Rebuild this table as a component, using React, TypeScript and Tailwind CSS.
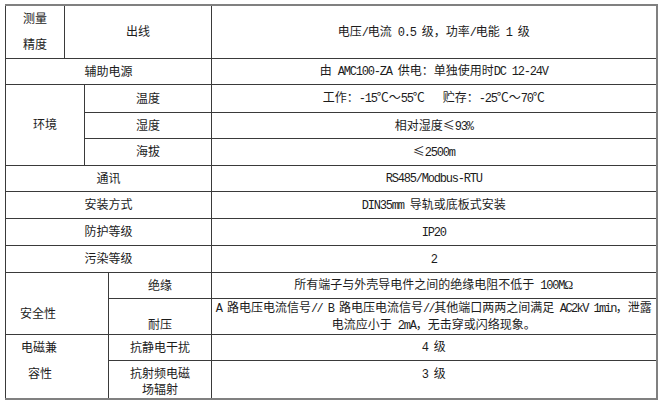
import React from "react";

const td = "border border-[#3a3a3a] text-center align-middle p-0";

function L({ children, tight }: { children: React.ReactNode; tight?: boolean }) {
  return (
    <span
      className={
        tight
          ? "font-['Liberation_Mono','Noto_Sans_CJK_SC',monospace] text-[12px] tracking-[-1.6px] whitespace-pre"
          : "font-['Liberation_Mono','Noto_Sans_CJK_SC',monospace] text-[12px] tracking-[-1.2px] whitespace-pre"
      }
    >
      {children}
    </span>
  );
}

function C({ children }: { children: React.ReactNode }) {
  return <span className="font-['Noto_Sans_CJK_SC',sans-serif]">{children}</span>;
}

export default function App() {
  return (
    <div className="w-[663px] h-[400px] bg-white pl-[5px] pt-[4px] font-['Liberation_Serif','Noto_Sans_CJK_SC',serif]">
      <table className="table-fixed border-collapse w-[651px] text-[12px] leading-4 text-[#1c1c1c] border-t-2 border-r-2 border-b-2 border-[#808080]">
        <colgroup>
          <col className="w-[59px]" />
          <col className="w-[20px]" />
          <col className="w-[24px]" />
          <col className="w-[103px]" />
          <col className="w-[445px]" />
        </colgroup>
        <tbody>
          <tr className="h-[52px]">
            <td className={`${td} leading-[26px]`}>
              测量
              <br />
              精度
            </td>
            <td className={td} colSpan={3}>出线</td>
            <td className={`${td} whitespace-pre`}>
              电压<L>/</L>电流<L> 0.5 </L>级，功率<L>/</L>电能<L> 1 </L>级
            </td>
          </tr>
          <tr className="h-[26px]">
            <td className={td} colSpan={4}>辅助电源</td>
            <td className={`${td} whitespace-pre`}>
              由<L> AMC100-ZA </L>供电：单独使用时<L>DC 12-24V</L>
            </td>
          </tr>
          <tr className="h-[28px]">
            <td className={td} colSpan={2} rowSpan={3}>环境</td>
            <td className={td} colSpan={2}>温度</td>
            <td className={`${td} whitespace-pre`}>
              工作：<L>-15</L>℃～<L>55</L>℃<L>   </L>贮存：<L>-25</L>℃～<L>70</L>℃
            </td>
          </tr>
          <tr className="h-[26px]">
            <td className={td} colSpan={2}>湿度</td>
            <td className={td}>
              相对湿度<C>≤</C><L>93%</L>
            </td>
          </tr>
          <tr className="h-[27px]">
            <td className={td} colSpan={2}>海拔</td>
            <td className={td}>
              <C>≤</C><L>2500m</L>
            </td>
          </tr>
          <tr className="h-[26px]">
            <td className={td} colSpan={4}>通讯</td>
            <td className={td}>
              <L>RS485/Modbus-RTU</L>
            </td>
          </tr>
          <tr className="h-[27px]">
            <td className={td} colSpan={4}>安装方式</td>
            <td className={`${td} whitespace-pre`}>
              <L>DIN35mm </L>导轨或底板式安装
            </td>
          </tr>
          <tr className="h-[27px]">
            <td className={td} colSpan={4}>防护等级</td>
            <td className={td}>
              <L>IP20</L>
            </td>
          </tr>
          <tr className="h-[27px]">
            <td className={td} colSpan={4}>污染等级</td>
            <td className={td}>
              <L>2</L>
            </td>
          </tr>
          <tr className="h-[26px]">
            <td className={`${td} !align-top !text-left pl-[14px] pt-[33px]`} colSpan={3} rowSpan={2}>
              安全性
            </td>
            <td className={td}>绝缘</td>
            <td className={`${td} whitespace-pre`}>
              所有端子与外壳导电件之间的绝缘电阻不低于<L> 100M</L>Ω
            </td>
          </tr>
          <tr className="h-[35px]">
            <td className={`${td} !align-bottom pb-[1px]`}>耐压</td>
            <td className={`${td} !align-top pt-[1px] whitespace-pre`}>
              <L tight>A </L>路电压电流信号<L tight>// B </L>路电压电流信号<L tight>//</L>其他端口两两之间满足<L tight> AC2kV 1min</L>，泄露
              <br />
              电流应小于<L> 2mA</L>，无击穿或闪络现象。
            </td>
          </tr>
          <tr className="h-[26px]">
            <td className={`${td} !align-top !text-left pl-[15px] leading-[26px]`} colSpan={3} rowSpan={2}>
              电磁兼
              <br />
              <span className="pl-[7px]">容性</span>
            </td>
            <td className={td}>抗静电干扰</td>
            <td className={`${td} whitespace-pre`}>
              <L>4 </L>级
            </td>
          </tr>
          <tr className="h-[37px]">
            <td className={`${td} !align-top pt-[5px]`}>
              抗射频电磁
              <br />
              场辐射
            </td>
            <td className={`${td} !align-top pt-[5px] whitespace-pre`}>
              <L>3 </L>级
            </td>
          </tr>
        </tbody>
      </table>
    </div>
  );
}
